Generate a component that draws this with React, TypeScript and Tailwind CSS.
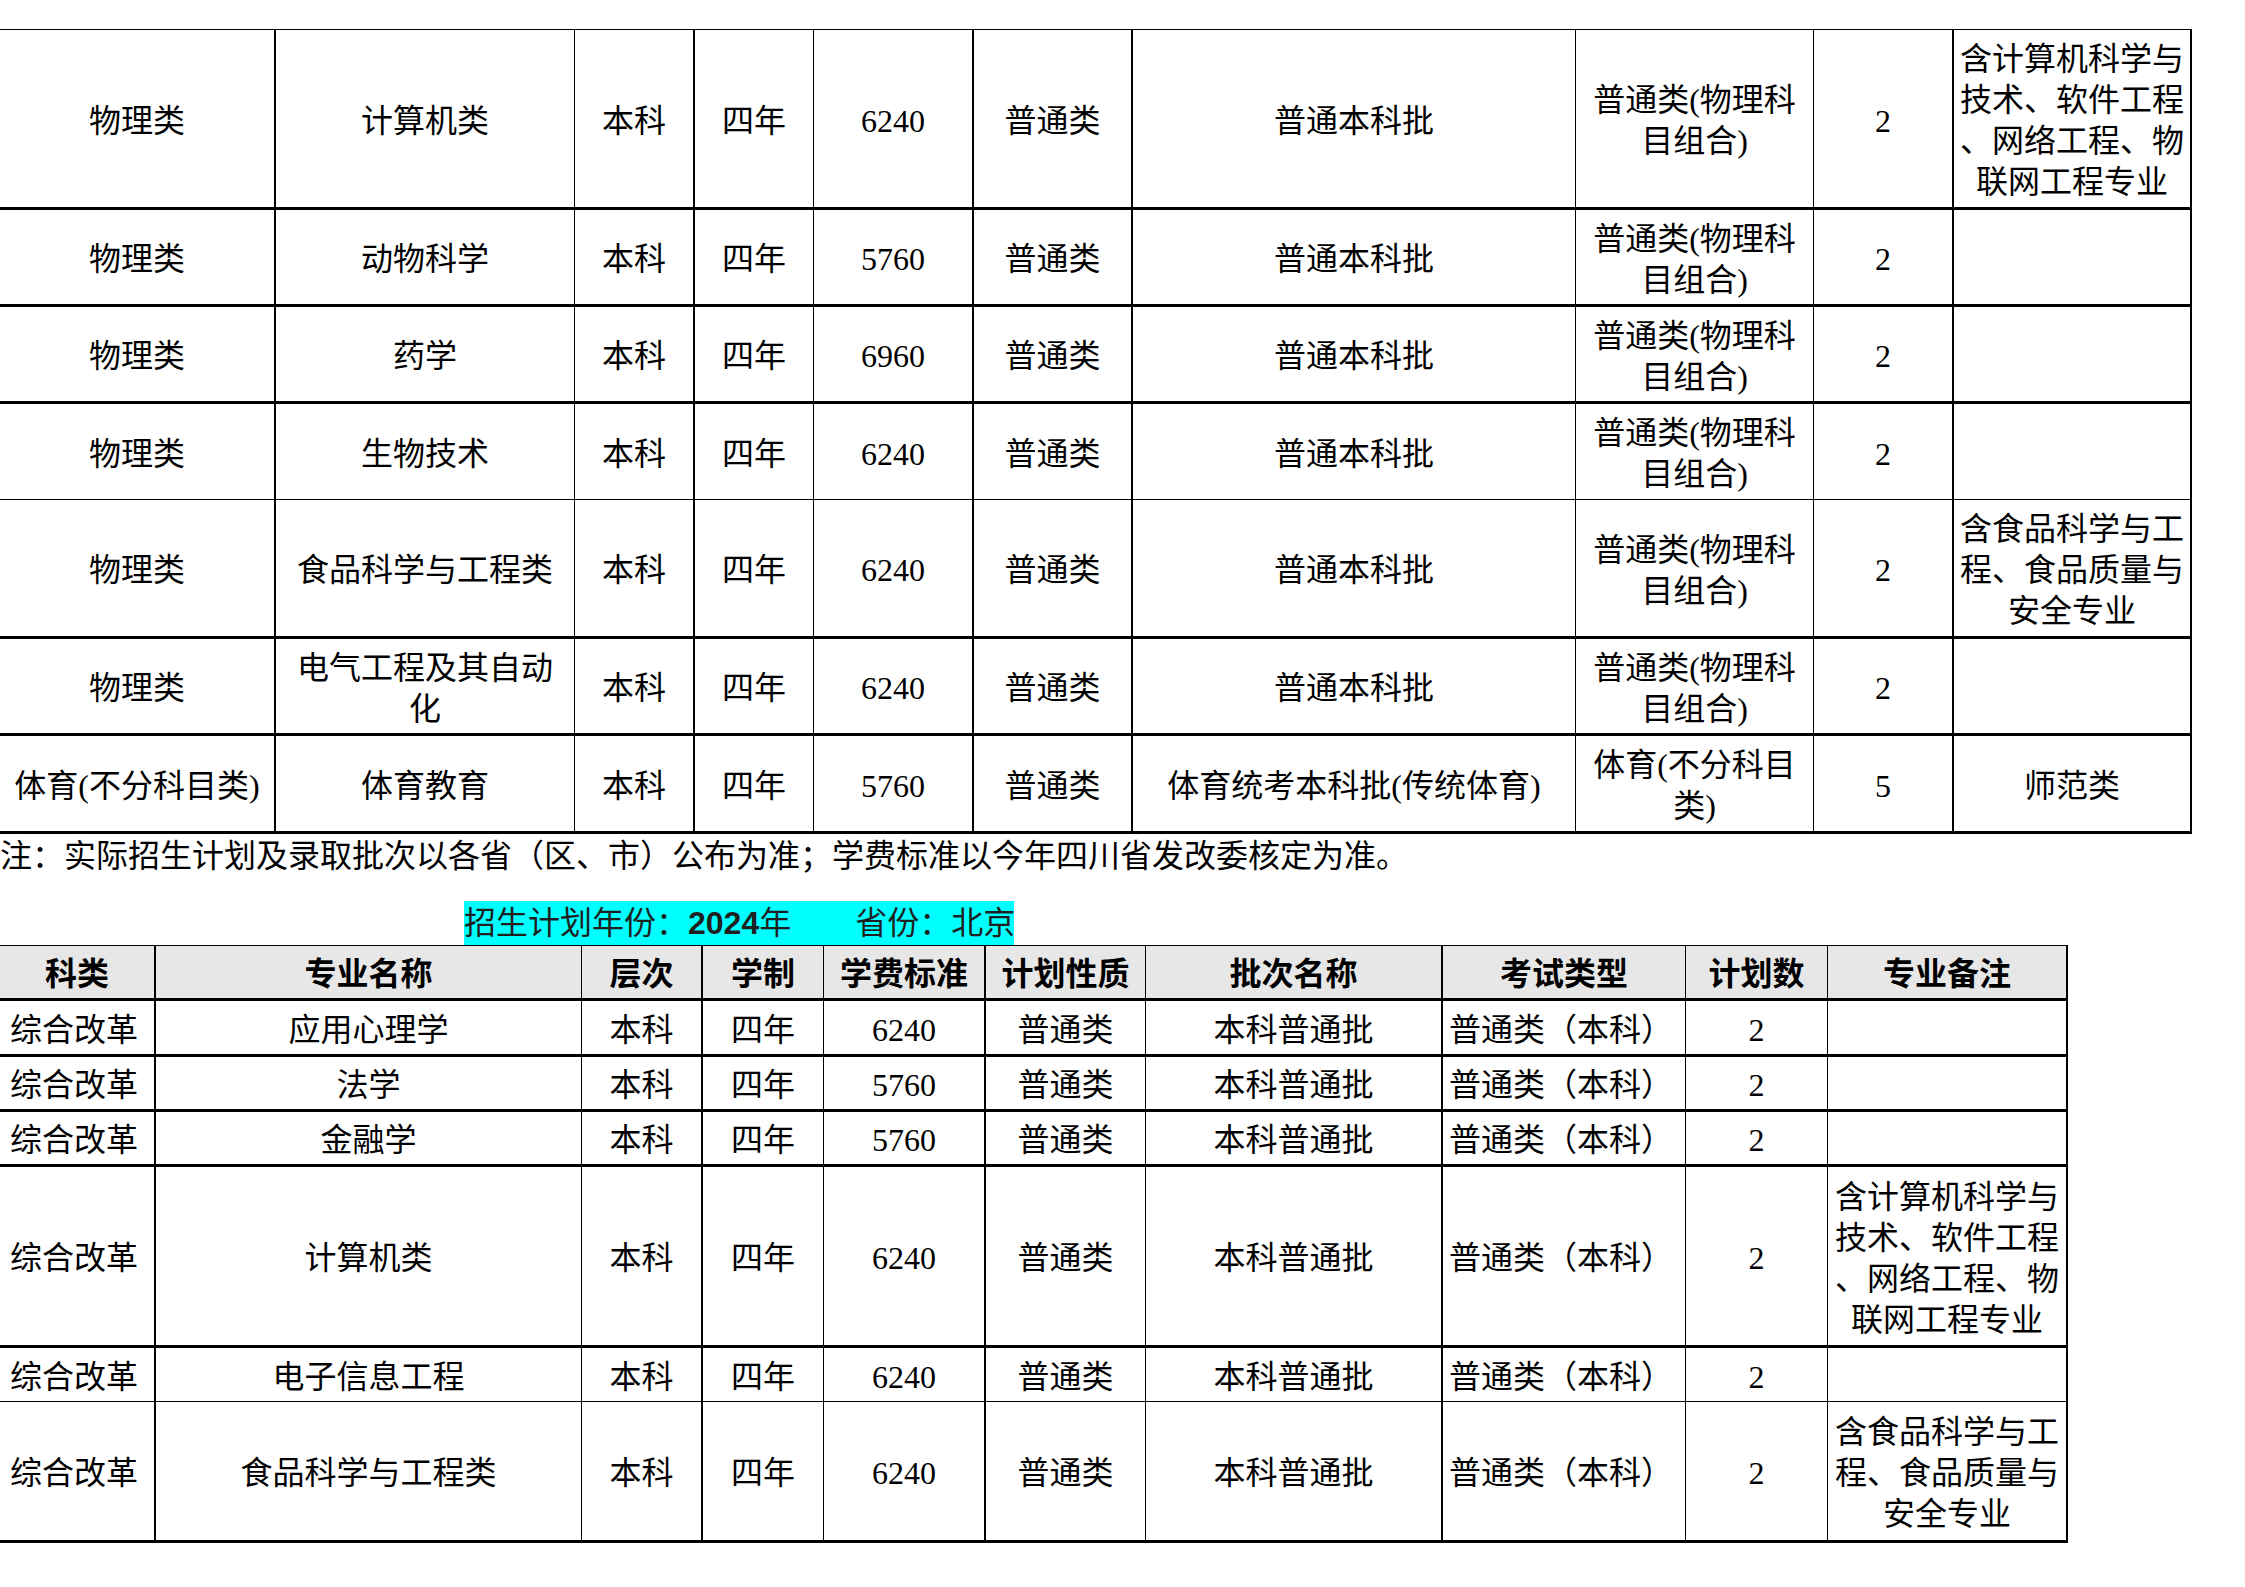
import clsx from "clsx";

const T1_COLS = "grid-cols-[276px_299px_120px_119px_160px_159px_443px_238px_140px_238px]";
const T2_COLS = "grid-cols-[156px_426px_121px_121px_162px_160px_297px_243px_142px_240px]";

const T1_RIGHT = [
  "border-r-2",
  "border-r",
  "border-r-2",
  "border-r",
  "border-r-2",
  "border-r-2",
  "border-r",
  "border-r",
  "border-r-2",
  "border-r-2",
];
const T2_RIGHT = [
  "border-r-2",
  "border-r",
  "border-r-2",
  "border-r",
  "border-r-2",
  "border-r",
  "border-r-2",
  "border-r",
  "border-r",
  "border-r-2",
];

type Row = { h: string; b: string; cells: string[] };

const CS_NOTE = "含计算机科学与\n技术、软件工程\n、网络工程、物\n联网工程专业";
const FOOD_NOTE = "含食品科学与工\n程、食品质量与\n安全专业";
const PHY_EXAM = "普通类(物理科\n目组合)";

const table1: Row[] = [
  {
    h: "h-[180px]",
    b: "border-b-[3px]",
    cells: ["物理类", "计算机类", "本科", "四年", "6240", "普通类", "普通本科批", PHY_EXAM, "2", CS_NOTE],
  },
  {
    h: "h-[97px]",
    b: "border-b-[3px]",
    cells: ["物理类", "动物科学", "本科", "四年", "5760", "普通类", "普通本科批", PHY_EXAM, "2", ""],
  },
  {
    h: "h-[97px]",
    b: "border-b-[3px]",
    cells: ["物理类", "药学", "本科", "四年", "6960", "普通类", "普通本科批", PHY_EXAM, "2", ""],
  },
  {
    h: "h-[96px]",
    b: "border-b",
    cells: ["物理类", "生物技术", "本科", "四年", "6240", "普通类", "普通本科批", PHY_EXAM, "2", ""],
  },
  {
    h: "h-[139px]",
    b: "border-b-[3px]",
    cells: ["物理类", "食品科学与工程类", "本科", "四年", "6240", "普通类", "普通本科批", PHY_EXAM, "2", FOOD_NOTE],
  },
  {
    h: "h-[97px]",
    b: "border-b-[3px]",
    cells: ["物理类", "电气工程及其自动\n化", "本科", "四年", "6240", "普通类", "普通本科批", PHY_EXAM, "2", ""],
  },
  {
    h: "h-[98px]",
    b: "border-b-[3px]",
    cells: [
      "体育(不分科目类)",
      "体育教育",
      "本科",
      "四年",
      "5760",
      "普通类",
      "体育统考本科批(传统体育)",
      "体育(不分科目\n类)",
      "5",
      "师范类",
    ],
  },
];

const HEADER = ["科类", "专业名称", "层次", "学制", "学费标准", "计划性质", "批次名称", "考试类型", "计划数", "专业备注"];

const table2: Row[] = [
  {
    h: "h-[56px]",
    b: "border-b-[3px]",
    cells: ["综合改革", "应用心理学", "本科", "四年", "6240", "普通类", "本科普通批", "普通类（本科）", "2", ""],
  },
  {
    h: "h-[55px]",
    b: "border-b-[3px]",
    cells: ["综合改革", "法学", "本科", "四年", "5760", "普通类", "本科普通批", "普通类（本科）", "2", ""],
  },
  {
    h: "h-[55px]",
    b: "border-b-[3px]",
    cells: ["综合改革", "金融学", "本科", "四年", "5760", "普通类", "本科普通批", "普通类（本科）", "2", ""],
  },
  {
    h: "h-[181px]",
    b: "border-b-[3px]",
    cells: ["综合改革", "计算机类", "本科", "四年", "6240", "普通类", "本科普通批", "普通类（本科）", "2", CS_NOTE],
  },
  {
    h: "h-[54px]",
    b: "border-b",
    cells: ["综合改革", "电子信息工程", "本科", "四年", "6240", "普通类", "本科普通批", "普通类（本科）", "2", ""],
  },
  {
    h: "h-[141px]",
    b: "border-b-[3px]",
    cells: ["综合改革", "食品科学与工程类", "本科", "四年", "6240", "普通类", "本科普通批", "普通类（本科）", "2", FOOD_NOTE],
  },
];

function PlanTable1() {
  return (
    <div className={clsx("grid w-[2192px] border-t border-black", T1_COLS)}>
      {table1.map((row, r) =>
        row.cells.map((text, i) => (
          <div
            key={`${r}-${i}`}
            className={clsx(
              "flex items-center justify-center border-black pt-[5px] text-center whitespace-pre-line",
              T1_RIGHT[i],
              row.h,
              row.b
            )}
          >
            {text}
          </div>
        ))
      )}
    </div>
  );
}

function PlanTable2() {
  return (
    <div className={clsx("grid w-[2068px] border-t border-black", T2_COLS)}>
      {HEADER.map((text, i) => (
        <div
          key={`h-${i}`}
          className={clsx(
            "flex h-[55px] items-center justify-center border-b-[3px] border-black bg-[#e7e7e7] pt-[4px] font-semibold",
            T2_RIGHT[i]
          )}
        >
          {text}
        </div>
      ))}
      {table2.map((row, r) =>
        row.cells.map((text, i) => (
          <div
            key={`${r}-${i}`}
            className={clsx(
              "flex items-center border-black pt-[5px] whitespace-pre-line",
              i === 0 ? "justify-start pl-[10px]" : i === 7 ? "justify-start pl-[6px]" : "justify-center text-center",
              T2_RIGHT[i],
              row.h,
              row.b
            )}
          >
            {text}
          </div>
        ))
      )}
    </div>
  );
}

export default function App() {
  return (
    <div className="min-h-screen w-[2245px] bg-white pt-[29px] font-['Liberation_Serif','Noto_Sans_CJK_SC',serif] text-[32px] leading-[41px] text-black">
      <PlanTable1 />

      <div className="h-[40px] pt-[2px] leading-[40px] whitespace-nowrap">
        注：实际招生计划及录取批次以各省（区、市）公布为准；学费标准以今年四川省发改委核定为准。
      </div>

      <div className="mt-[27px] ml-[464px] h-[44px] w-[550px] bg-[#00ffff] leading-[44px] whitespace-pre text-[#1f1f1f]">
        招生计划年份：<span className="font-['Liberation_Sans'] font-bold">2024</span>年　　省份：北京
      </div>

      <PlanTable2 />
    </div>
  );
}
